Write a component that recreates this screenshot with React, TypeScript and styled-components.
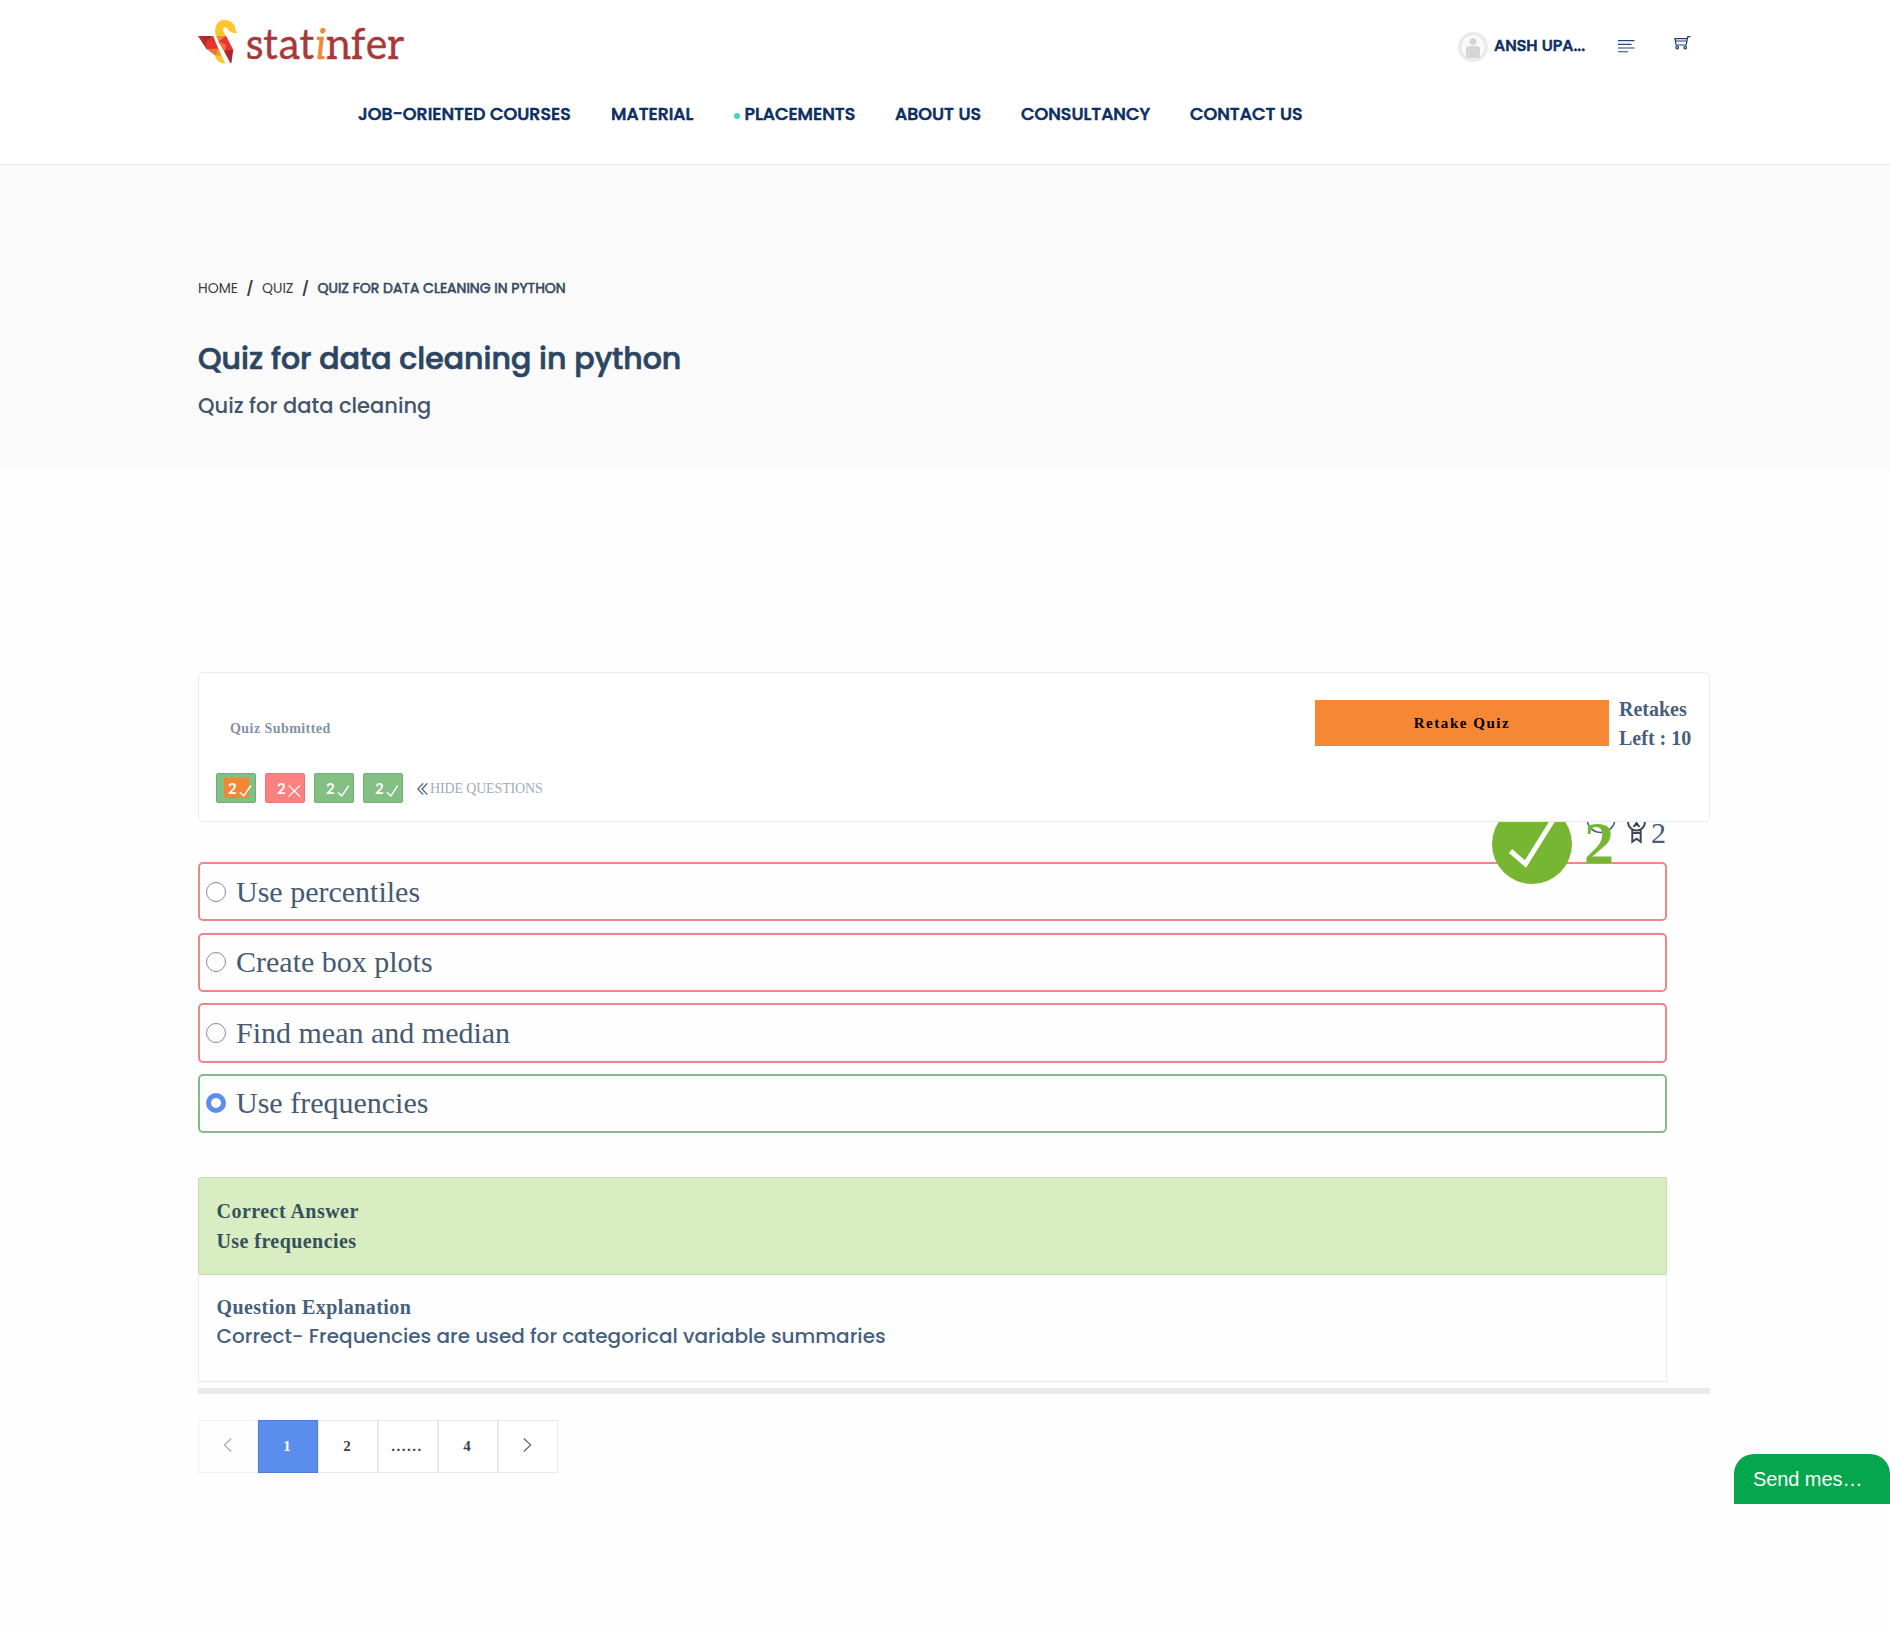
import React from "react";
import styled, { createGlobalStyle } from "styled-components";

const SANS = `Poppins, Inter, "Liberation Sans", sans-serif`;
const SERIF = `"Liberation Serif", "Times New Roman", serif`;

const GlobalStyle = createGlobalStyle`
  *, *::before, *::after { box-sizing: border-box; }
  body { margin: 0; background: #fefefe; color: #44597a; font-family: ${SERIF}; }
  h1, h2, h3, p, ul, ol { margin: 0; padding: 0; font-size: inherit; font-weight: inherit; }
  ul, ol { list-style: none; }
  button { font: inherit; border: 0; padding: 0; cursor: pointer; }
  svg { display: block; flex: none; }
`;

const Page = styled.div`
  min-height: 1627px;
  overflow: hidden;
`;

const Text = styled.span<{ $ls?: number; $stroke?: number }>`
  letter-spacing: ${(p) => p.$ls ?? 0}px;
  white-space: nowrap;
  -webkit-text-stroke: ${(p) => p.$stroke ?? 0}px currentColor;
`;

/* ---------- header ---------- */

const Header = styled.header`
  height: 165px;
  padding: 0 180px 0 198px;
  background: #fff;
  border-bottom: 1px solid #e8e8e8;
`;

const TopBar = styled.div`
  display: flex;
  justify-content: space-between;
  align-items: flex-start;
  height: 97px;
  padding-top: 10px;
  padding-right: 19px;
`;

const LogoLink = styled.a`
  padding-top: 9px;
`;

const HeaderTools = styled.div`
  display: flex;
  align-items: flex-start;
  padding-top: 22px;
  color: #0c2d62;
`;

const UserLink = styled.a`
  display: flex;
  align-items: center;
  gap: 6px;
  width: 160px;
  font: 500 16px/30px ${SANS};
`;

const UserName = styled(Text)`
  margin-top: -3px;
`;

const ToolIcon = styled.span<{ $top: number; $gap: number }>`
  padding-top: ${(p) => p.$top}px;
  margin-left: ${(p) => p.$gap}px;
`;

const Nav = styled.nav`
  display: flex;
  gap: 40px;
  padding-left: 160px;
  font: 500 17.5px/34px ${SANS};
  color: #0c2d62;
`;

const NavItem = styled.a<{ $width: number }>`
  display: flex;
  align-items: center;
  width: ${(p) => p.$width}px;
`;

const NavDot = styled.i`
  flex: none;
  width: 6px;
  height: 6px;
  margin: 4px 5px 0 0;
  border-radius: 50%;
  background: #3fd9ad;
`;

/* ---------- hero ---------- */

const Hero = styled.section`
  height: 305px;
  padding: 113px 198px 0;
  background: #fafafa;
  font-family: ${SANS};
`;

const Breadcrumb = styled.ol`
  display: flex;
  align-items: center;
  height: 20px;
  font-size: 14px;
`;

const Crumb = styled.li<{ $current?: boolean }>`
  color: ${(p) => (p.$current ? "#364a62" : "#3b3b3b")};
`;

const Slash = styled.li`
  width: 24px;
  text-align: center;
  font-size: 14px;
  font-weight: 600;
  color: #3b3b3b;
`;

const Title = styled.h1`
  margin-top: 41px;
  font-size: 30px;
  font-weight: 500;
  line-height: 40px;
  color: #2c4562;
`;

const Subtitle = styled.p`
  margin-top: 12px;
  font-size: 21px;
  font-weight: 500;
  line-height: 30px;
  color: #43556a;
`;

/* ---------- quiz ---------- */

const Quiz = styled.main`
  width: 1512px;
  margin: 202px 0 0 198px;
`;

const StatusCard = styled.section`
  position: relative;
  z-index: 2;
  height: 150px;
  border: 1px solid #ebebeb;
  border-radius: 5px;
  background: #fff;
`;

const StatusTop = styled.div`
  display: flex;
  justify-content: space-between;
  height: 100px;
  padding: 27px 16px 0 31px;
`;

const StatusLabel = styled.h2`
  padding-top: 18px;
  font: 700 14px/22px ${SERIF};
  color: #8292a5;
`;

const RetakeArea = styled.div`
  display: flex;
  align-items: flex-start;
  gap: 10px;
`;

const RetakeButton = styled.button`
  width: 294px;
  height: 46px;
  padding-bottom: 1px;
  background: #f68735;
  color: #000;
  font: 700 15px/20px ${SERIF};
`;

const RetakesLeft = styled.p`
  width: 74px;
  margin-top: -5.5px;
  font: 700 20px/29px ${SERIF};
  color: #465f7c;
`;

const ChipRow = styled.div`
  display: flex;
  align-items: center;
  gap: 9px;
  height: 30px;
  padding-left: 17px;
`;

const Chip = styled.span<{ $wrong?: boolean }>`
  display: flex;
  align-items: center;
  width: 40px;
  height: 30px;
  padding-left: 7px;
  border: 1px solid ${(p) => (p.$wrong ? "#e57777" : "#74ac75")};
  border-radius: 2px;
  background: ${(p) => (p.$wrong ? "#ff8080" : "#81c082")};
  color: #fff;
  font: 700 15px/20px Lato, ${SANS};
`;

const ChipFill = styled.span<{ $current?: boolean }>`
  display: flex;
  align-items: center;
  gap: 2.5px;
  width: 25px;
  height: 20px;
  padding-left: 4px;
  background: ${(p) => (p.$current ? "#f58634" : "transparent")};

  svg { margin-top: 5px; }
`;

const HideQuestions = styled.a`
  display: flex;
  align-items: center;
  gap: 2px;
  margin-left: 5px;
  padding-top: 1px;
  font: 400 14px/20px ${SERIF};
  color: #a3acb8;
`;

const QuestionBody = styled.section`
  position: relative;
  width: 1469px;
  padding-top: 40px;
`;

const ResultOverlay = styled.div`
  position: absolute;
  z-index: 1;
  top: -18px;
  right: 53px;
  display: flex;
  align-items: flex-start;
  gap: 12px;
  font: 700 60px/60px ${SERIF};
  color: #76b633;
`;

const Score = styled.div`
  position: absolute;
  top: -6px;
  right: 1px;
  display: flex;
  align-items: flex-start;
  gap: 4px;
  font: 400 30px/34px ${SERIF};
  color: #465f7c;
`;

const BubbleSlot = styled.span`
  padding-top: 1px;
  margin-right: 7px;
`;

const BadgeCheck = styled.span`
  display: grid;
  place-items: center;
  width: 80px;
  height: 80px;
  border-radius: 50%;
  background: #76b633;
`;

const BigScore = styled.span`
  padding-top: 9px;
`;

const Options = styled.ul`
  display: flex;
  flex-direction: column;
  gap: 11.2px;
`;

const Option = styled.li<{ $correct?: boolean }>`
  display: flex;
  align-items: center;
  gap: 10px;
  height: 59.4px;
  padding: 0 6px;
  border: 2px solid ${(p) => (p.$correct ? "#87b888" : "#ec8785")};
  border-radius: 5px;
  font: 400 30px/40px ${SERIF};
  color: #465a72;
`;

const Radio = styled.span<{ $checked?: boolean }>`
  width: 20px;
  height: 20px;
  border: ${(p) => (p.$checked ? "5px solid #5b8dee" : "1px solid #8b8b8b")};
  border-radius: 50%;
  background: #fff;
`;

const Answer = styled.section`
  height: 98px;
  margin-top: 43.6px;
  padding: 18px 17.5px 0;
  border: 1px solid #c4dcb0;
  border-radius: 2px;
  background: #d8edc2;
  font: 700 20px/30px ${SERIF};
  color: #36505c;
`;

const Explanation = styled.section`
  height: 107px;
  padding: 17px 17.5px 0;
  border: 1px solid #e9e9e9;
  border-top: 0;
  font: 700 20px/30px ${SERIF};
  color: #465f7c;
`;

const ExplanationText = styled.p`
  font: 500 20px/29px ${SANS};
`;

const Divider = styled.div`
  height: 6px;
  margin-top: 6px;
  background: #eaeaea;
`;

const Pagination = styled.nav`
  display: flex;
  margin-top: 26px;
`;

const PageCell = styled.button<{ $active?: boolean; $disabled?: boolean }>`
  display: flex;
  align-items: center;
  justify-content: center;
  width: 60px;
  height: 53px;
  padding-right: 2px;
  border: 1px solid ${(p) => (p.$active ? "#507dd0" : "#e9e9e9")};
  background: ${(p) => (p.$active ? "#5b8dee" : "#fff")};
  color: ${(p) => (p.$active ? "#fff" : "#35434f")};
  opacity: ${(p) => (p.$disabled ? 0.55 : 1)};
  font: 700 15px/20px ${SERIF};

  svg { margin: -3px 0 0 0; }
`;

const ChatTab = styled.aside`
  position: fixed;
  top: 1454px;
  right: 0;
  width: 156px;
  height: 50px;
  padding-left: 19px;
  border-radius: 20px 20px 0 0;
  background: #05a74e;
  color: #fff;
  font: 400 20px/50px "Liberation Sans", Arial, sans-serif;
`;

/* ---------- drawings ---------- */

const Logo = () => (
  <svg width="214" height="60" viewBox="0 0 214 60" aria-label="statinfer">
    <path d="M0 17H15L8.700 23.500Z" fill="#a92d33" />
    <path d="M0 17 10 22 8.700 30.300Z" fill="#a92d33" />
    <path d="M15 17 20.500 30 8.700 30.300 7.500 23Z" fill="#e8332f" />
    <path d="M15 17 17 21.500 8 23.500Z" fill="#d43a30" />
    <path d="M8.700 30.300 20.500 29.500 18 37Z" fill="#ee7334" />
    <path d="M20.500 29.500 24 38 17.500 37Z" fill="#f29a34" />
    <path d="M17.500 36.500 24 37.500 27.300 44.600Q20 44.500 17.200 38Z" fill="#fcc52c" />
    <path d="M18 16.800 28 16.800 21 23.500Z" fill="#f08a33" />
    <path d="M28 16.800 35.300 31 26.500 32.500 20.500 22.500Z" fill="#ec3237" />
    <path d="M20.500 22 28.500 26 26.500 33Z" fill="#ee7334" />
    <path d="M35.300 30.500 33.500 43.500 32.500 44.400 26 32Z" fill="#a52b31" />
    <path d="M17.800 17C15.500 7 19.500 1 26.500 1C33.500 1 37.500 5.500 37.300 10.500L39.500 13.700C35 14.500 31.500 13 29.300 9.500C27.500 7 24.300 8.500 25 11.500C25.400 13.500 27 14.500 28 17Z" fill="#fcc62c" />
    <text
      x="48"
      y="39.500"
      textLength="158.500"
      lengthAdjust="spacingAndGlyphs"
      fontFamily='Aleo, "DejaVu Serif", serif'
      fontSize="42"
      fill="#a9383b"
      stroke="#a9383b"
      strokeWidth=".3"
    >
      stat<tspan fontStyle="italic" fill="#ef8a35" stroke="#ef8a35">i</tspan>nfer
    </text>
  </svg>
);

const Avatar = () => (
  <svg width="30" height="30" viewBox="0 0 30 30">
    <circle cx="15" cy="15" r="15" fill="#eaeaea" />
    <circle cx="15" cy="15" r="11.500" fill="#fafafa" />
    <circle cx="15" cy="9.500" r="3.500" fill="#d5d5d5" />
    <path d="M8 26V17q0-3 3-3h8q3 0 3 3v9z" fill="#d5d5d5" />
    <path d="M10.300 19v7M19.700 19v7" stroke="#e6e6e6" strokeWidth=".6" />
  </svg>
);

const MenuLines = () => (
  <svg width="17" height="13" viewBox="0 0 17 13" stroke="#2a4674" strokeWidth="1.100">
    <path d="M0 .6h16.500M0 4.400h13.500M0 8h16.500M0 11.800h10" />
  </svg>
);

const Cart = () => (
  <svg width="17" height="14" viewBox="0 0 17 14" fill="none" stroke="#1f3f72" strokeWidth="1.200">
    <path d="M.3 2.600H13.200M1 2.600 2 9H12.200L13.800.7H16.500M1.300 5H12.900" />
    <circle cx="3.200" cy="11.600" r="1.300" />
    <circle cx="11.200" cy="11.600" r="1.300" />
  </svg>
);

const SmallCheck = () => (
  <svg width="13" height="12" viewBox="0 0 13 12" fill="none" stroke="#fff" strokeWidth="1.500">
    <path d="M.8 7.200 4.800 10.800 11.800.6" />
  </svg>
);

const SmallCross = () => (
  <svg width="13" height="12" viewBox="0 0 13 12" fill="none" stroke="#fff" strokeWidth="1.300">
    <path d="M.6.4 12 11.600M12 .4.6 11.600" />
  </svg>
);

const DoubleLeft = () => (
  <svg width="11" height="12" viewBox="0 0 11 12" fill="none" stroke="#44597a" strokeWidth="1.200">
    <path d="M6.200.4.8 6l5.400 5.600M10.400.4 5 6l5.400 5.600" />
  </svg>
);

const Chevron = ({ right }: { right?: boolean }) => (
  <svg width="9" height="14" viewBox="0 0 9 14" fill="none" stroke="#666" strokeWidth="1.200">
    <path d={right ? "M.7.5 7.700 7 .7 13.500" : "M8.300.5 1.300 7l7 6.500"} />
  </svg>
);

const LargeCheck = () => (
  <svg width="50" height="50" viewBox="0 0 50 50" fill="none" stroke="#fff" strokeWidth="5">
    <path d="M3.500 32 18.500 45 46 1" />
  </svg>
);

const Bubble = () => (
  <svg width="30" height="17" viewBox="0 0 30 17" fill="none" stroke="#465f7c" strokeWidth="1.600">
    <circle cx="15" cy="1.500" r="14" />
  </svg>
);

const Medal = () => (
  <svg width="20" height="28" viewBox="0 0 20 28" fill="none" stroke="#3d4852" strokeWidth="2">
    <circle cx="9.500" cy="6" r="8.500" />
    <path d="M5.300 14v11.800l4.200-3 4.200 3V14M6.500 11l3-4 3 4M9.500 7v3M5.300 17h8.400" />
  </svg>
);

/* ---------- data ---------- */

const NAV = [
  { label: "JOB-ORIENTED COURSES", width: 213 },
  { label: "MATERIAL", width: 82.5 },
  { label: "PLACEMENTS", width: 121.5, dot: true },
  { label: "ABOUT US", width: 86 },
  { label: "CONSULTANCY", width: 129 },
  { label: "CONTACT US", width: 113 },
];

const CHIPS = [
  { correct: true, current: true },
  { correct: false },
  { correct: true },
  { correct: true },
];

const OPTIONS = ["Use percentiles", "Create box plots", "Find mean and median", "Use frequencies"];
const CORRECT = "Use frequencies";

export default function App() {
  return (
    <Page>
      <GlobalStyle />
      <Header>
        <TopBar>
          <LogoLink><Logo /></LogoLink>
          <HeaderTools>
            <UserLink>
              <Avatar />
              <UserName $stroke={0.6}>ANSH UPA...</UserName>
            </UserLink>
            <ToolIcon $top={8} $gap={0}><MenuLines /></ToolIcon>
            <ToolIcon $top={4} $gap={39}><Cart /></ToolIcon>
          </HeaderTools>
        </TopBar>
        <Nav>
          {NAV.map((n) => (
            <NavItem key={n.label} $width={n.width}>
              {n.dot && <NavDot />}
              <Text $stroke={0.6}>{n.label}</Text>
            </NavItem>
          ))}
        </Nav>
      </Header>

      <Hero>
        <Breadcrumb>
          <Crumb><Text>HOME</Text></Crumb>
          <Slash>/</Slash>
          <Crumb><Text>QUIZ</Text></Crumb>
          <Slash>/</Slash>
          <Crumb $current><Text $stroke={0.6}>QUIZ FOR DATA CLEANING IN PYTHON</Text></Crumb>
        </Breadcrumb>
        <Title><Text $stroke={0.7}>Quiz for data cleaning in python</Text></Title>
        <Subtitle><Text>Quiz for data cleaning</Text></Subtitle>
      </Hero>

      <Quiz>
        <StatusCard>
          <StatusTop>
            <StatusLabel><Text $ls={0.44}>Quiz Submitted</Text></StatusLabel>
            <RetakeArea>
              <RetakeButton><Text $ls={1.54}>Retake Quiz</Text></RetakeButton>
              <RetakesLeft>Retakes<br />Left : 10</RetakesLeft>
            </RetakeArea>
          </StatusTop>
          <ChipRow>
            {CHIPS.map((c, i) => (
              <Chip key={i} $wrong={!c.correct}>
                <ChipFill $current={c.current}>
                  2{c.correct ? <SmallCheck /> : <SmallCross />}
                </ChipFill>
              </Chip>
            ))}
            <HideQuestions>
              <DoubleLeft />
              <Text $ls={-0.15}>HIDE QUESTIONS</Text>
            </HideQuestions>
          </ChipRow>
        </StatusCard>

        <QuestionBody>
          <Score>
            <BubbleSlot><Bubble /></BubbleSlot>
            <Medal />
            <span>2</span>
          </Score>
          <ResultOverlay>
            <BadgeCheck><LargeCheck /></BadgeCheck>
            <BigScore>2</BigScore>
          </ResultOverlay>
          <Options>
            {OPTIONS.map((o) => (
              <Option key={o} $correct={o === CORRECT}>
                <Radio $checked={o === CORRECT} />
                <Text>{o}</Text>
              </Option>
            ))}
          </Options>
          <Answer>
            <p><Text $ls={0.47}>Correct Answer</Text></p>
            <p><Text $ls={0.43}>{CORRECT}</Text></p>
          </Answer>
          <Explanation>
            <h3><Text $ls={0.43}>Question Explanation</Text></h3>
            <ExplanationText>
              <Text>Correct- Frequencies are used for categorical variable summaries</Text>
            </ExplanationText>
          </Explanation>
        </QuestionBody>
        <Divider />
        <Pagination>
          <PageCell $disabled><Chevron /></PageCell>
          <PageCell $active>1</PageCell>
          <PageCell>2</PageCell>
          <PageCell><Text $ls={1.5}>......</Text></PageCell>
          <PageCell>4</PageCell>
          <PageCell><Chevron right /></PageCell>
        </Pagination>
      </Quiz>

      <ChatTab><Text $ls={-0.08}>Send mes…</Text></ChatTab>
    </Page>
  );
}
